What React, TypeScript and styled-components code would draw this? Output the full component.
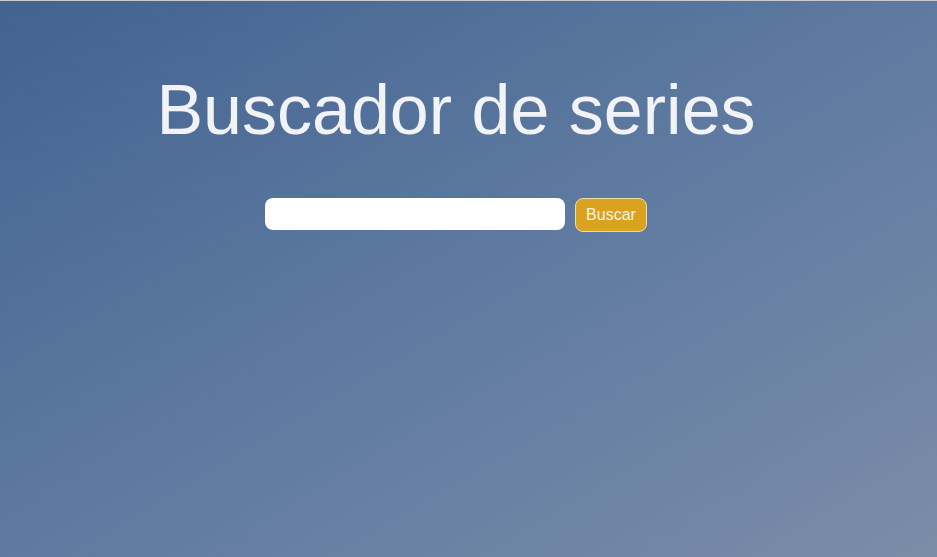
import React from "react";
import styled, { createGlobalStyle } from "styled-components";

const Global = createGlobalStyle`
  html, body { margin: 0; padding: 0; }
  body { font-family: "Liberation Sans", Arial, sans-serif; }
`;

const Page = styled.main`
  box-sizing: border-box;
  width: 937px;
  height: 557px;
  border-top: 1px solid #c9cbcf;
  background: linear-gradient(to bottom right, #426390 0%, #5e7aa0 50%, #7b8ca8 100%);
  display: flex;
  flex-direction: column;
  align-items: center;
  padding: 0 25px 0 0;
`;

const Title = styled.h1`
  margin: 69px 0 0;
  font-size: 70px;
  font-weight: 400;
  line-height: 80px;
  color: #f1f3f7;
  letter-spacing: 0;
`;

const SearchForm = styled.form`
  display: flex;
  align-items: flex-start;
  gap: 10px;
  margin-top: 48px;
`;

const SearchInput = styled.input`
  box-sizing: border-box;
  width: 300px;
  height: 32px;
  border: none;
  border-radius: 8px;
  background: #ffffff;
  padding: 0 10px;
  font-family: "Liberation Sans", Arial, sans-serif;
  font-size: 16px;
  outline: none;
`;

const SearchButton = styled.button`
  box-sizing: border-box;
  height: 34px;
  padding: 0 10px;
  border: 1px solid #ecdcae;
  border-radius: 8px;
  background: #daa21f;
  color: #f6f1e4;
  font-family: "Liberation Sans", Arial, sans-serif;
  font-size: 16px;
  cursor: pointer;
`;

export default function App() {
  return (
    <>
      <Global />
      <Page>
        <Title>Buscador de series</Title>
        <SearchForm onSubmit={(e) => e.preventDefault()}>
          <SearchInput type="text" />
          <SearchButton type="submit">Buscar</SearchButton>
        </SearchForm>
      </Page>
    </>
  );
}
